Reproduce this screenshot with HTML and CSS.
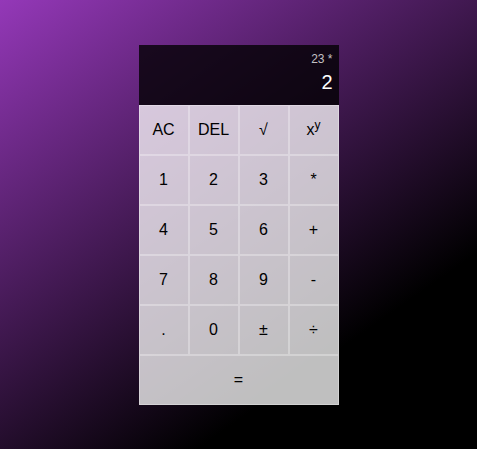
FILE: index.html
```html
<!DOCTYPE html>
<html lang="en">
<head>
<meta charset="utf-8">
<title>Calculator</title>
<link rel="stylesheet" href="styles.css">
</head>
<body>
  <div class="calculator">
    <div class="output">
      <div class="previous">23 *</div>
      <div class="current">2</div>
    </div>
    <button class="key">AC</button>
    <button class="key">DEL</button>
    <button class="key">√</button>
    <button class="key">x<sup>y</sup></button>
    <button class="key">1</button>
    <button class="key">2</button>
    <button class="key">3</button>
    <button class="key">*</button>
    <button class="key">4</button>
    <button class="key">5</button>
    <button class="key">6</button>
    <button class="key">+</button>
    <button class="key">7</button>
    <button class="key">8</button>
    <button class="key">9</button>
    <button class="key">-</button>
    <button class="key">.</button>
    <button class="key">0</button>
    <button class="key">±</button>
    <button class="key">÷</button>
    <button class="key span-4">=</button>
  </div>
</body>
</html>
```
FILE: styles.css
```css
* {
  box-sizing: border-box;
}

html, body {
  margin: 0;
  height: 100%;
}

body {
  background: linear-gradient(145deg, #9438b8 0%, #000 75%);
  font-family: "Liberation Sans", Arial, sans-serif;
  display: grid;
  place-items: center;
}

.calculator {
  display: grid;
  grid-template-columns: repeat(4, 50px);
  grid-template-rows: 60px repeat(6, 50px);
}

.output {
  grid-column: 1 / -1;
  background-color: rgba(0, 0, 0, 0.78);
  padding: 7px 6px 0;
  text-align: right;
}

.previous {
  color: rgba(255, 255, 255, 0.75);
  font-size: 12px;
  line-height: 14px;
}

.current {
  color: #fff;
  font-size: 20px;
  line-height: 24px;
  margin-top: 4px;
}

.key {
  font-family: "Liberation Sans", Arial, sans-serif;
  font-size: 16px;
  color: #000;
  border: 1px solid rgba(255, 255, 255, 0.3);
  background-color: rgba(255, 255, 255, 0.75);
  padding: 0;
  margin: 0;
  outline: none;
  cursor: pointer;
}

.key sup {
  font-size: 12px;
  line-height: 0;
}

.span-4 {
  grid-column: span 4;
}
```
